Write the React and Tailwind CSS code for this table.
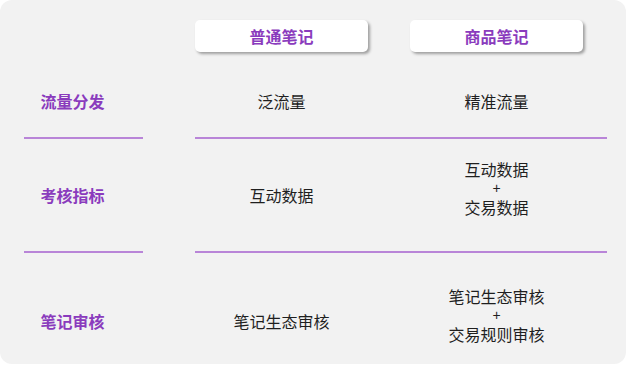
const rows = [
  {
    label: "流量分发",
    normal: ["泛流量"],
    product: ["精准流量"],
    shift: "",
  },
  {
    label: "考核指标",
    normal: ["互动数据"],
    product: ["互动数据", "+", "交易数据"],
    shift: "pb-[13px]",
  },
  {
    label: "笔记审核",
    normal: ["笔记生态审核"],
    product: ["笔记生态审核", "+", "交易规则审核"],
    shift: "pb-[12px]",
  },
];

const rowStyles = ["h-[85px] pt-[13px]", "h-[112px]", "h-[111px] pt-[25px]"];

function Cell({ lines, className = "" }) {
  return (
    <div className={`w-[173px] flex flex-col items-center text-[16px] text-[#1f1f1f] ${className}`}>
      {lines.map((l, i) =>
        l === "+" ? (
          <div key={i} className="h-[19px] leading-[19px] text-[14px] font-['Liberation_Sans',sans-serif]">
            +
          </div>
        ) : (
          <div key={i} className="h-[19px] leading-[19px]">
            {l}
          </div>
        )
      )}
    </div>
  );
}

function Divider() {
  return (
    <div className="flex">
      <div className="ml-[24px] w-[119px] h-[2px] bg-[#b985d8]" />
      <div className="ml-[52px] w-[412px] h-[2px] bg-[#b985d8]" />
    </div>
  );
}

export default function App() {
  return (
    <div className="w-[628px] h-[366px] bg-white" style={{ fontFamily: '"Noto Sans CJK SC", "Noto Sans", sans-serif' }}>
      <div className="w-[626px] h-[364px] bg-[#f2f2f2] rounded-[12px] pt-[20px]">
        {/* header */}
        <div className="flex">
          <div className="ml-[195px] flex gap-[42px]">
            {["普通笔记", "商品笔记"].map((t) => (
              <div
                key={t}
                className="w-[173px] h-[32px] bg-white rounded-[5px] shadow-[2px_2px_3px_rgba(0,0,0,0.35)] flex items-center justify-center text-[16px] font-bold text-[#8a3bbd]"
              >
                {t}
              </div>
            ))}
          </div>
        </div>

        {rows.map((r, i) => (
          <div key={r.label}>
            {i > 0 && <Divider />}
            <div className={`flex items-center ${rowStyles[i]}`}>
              <div className="ml-[24px] w-[97px] text-center text-[16px] font-bold text-[#8a3bbd]">
                {r.label}
              </div>
              <div className="ml-[74px] flex items-center gap-[42px]">
                <Cell lines={r.normal} />
                <Cell lines={r.product} className={r.shift} />
              </div>
            </div>
          </div>
        ))}
      </div>
    </div>
  );
}
